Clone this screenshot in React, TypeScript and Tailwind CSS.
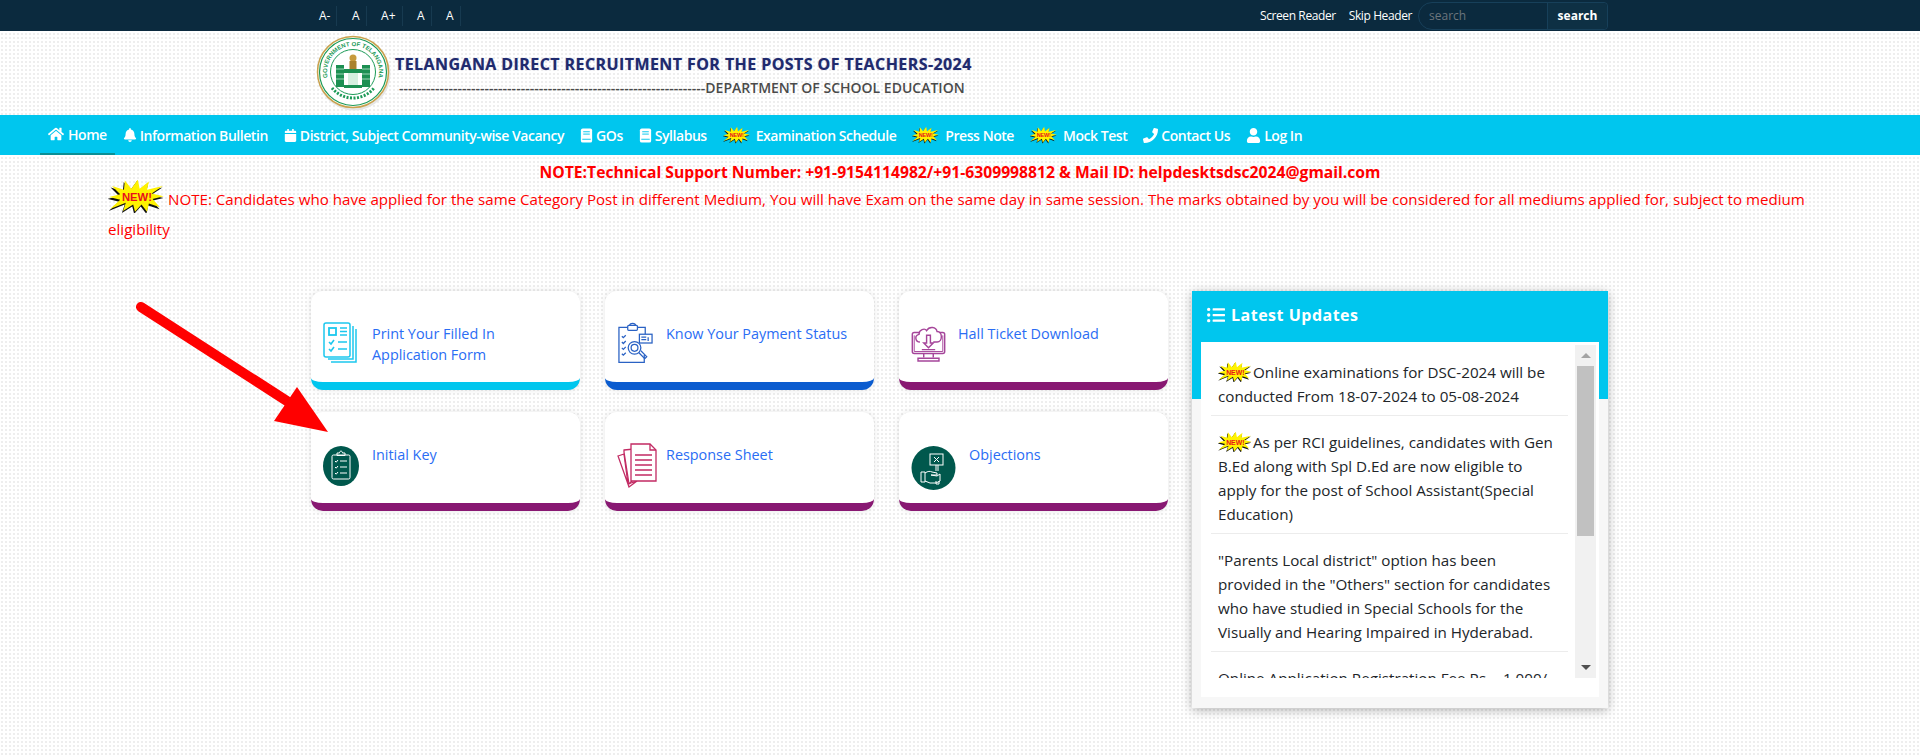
import type { ReactNode } from "react";
import { FaHome, FaBell, FaCalendar, FaPhone, FaUser, FaListUl } from "react-icons/fa";

const burstPoints =
  "31,0 33,10 43,2 41,11 58,7 46,15 59,18 47,21 55,30 43,26 41,35 35,27 28,35 26,27 15,34 18,25 1,32 12,22 0,19 12,16 3,7 16,11 17,1 24,10";

const NewBurst = ({ className }: { className: string }) => (
  <svg viewBox="0 0 59 35" className={className}>
    <polygon points={burstPoints} fill="#111" transform="translate(-1 1)" />
    <polygon points={burstPoints} fill="#fff200" transform="translate(0.5 -0.5) scale(0.98)" />
    <text x="30" y="22" textAnchor="middle" fontSize="12" fontWeight="700" fontFamily="Liberation Sans, sans-serif" fill="#e8101c">
      NEW!
    </text>
  </svg>
);

const BookIcon = () => (
  <svg viewBox="0 0 13 16" className="w-[13px] h-[15px]">
    <rect x="0.500" y="0.500" width="12" height="15" rx="2" fill="#fff" />
    <path d="M3 4h7M3 6.500h7M2 12h9" stroke="#00c6ee" strokeWidth="1" />
  </svg>
);

const navItems: { label: string; icon?: ReactNode; burst?: boolean }[] = [
  { label: "Information Bulletin", icon: <FaBell size={14} /> },
  { label: "District, Subject Community-wise Vacancy", icon: <FaCalendar size={13} /> },
  { label: "GOs", icon: <BookIcon /> },
  { label: "Syllabus", icon: <BookIcon /> },
  { label: "Examination Schedule", burst: true },
  { label: "Press Note", burst: true },
  { label: "Mock Test", burst: true },
  { label: "Contact Us", icon: <FaPhone size={15} /> },
  { label: "Log In", icon: <FaUser size={15} /> },
];

const PrintIcon = () => (
  <svg viewBox="0 0 36 42" className="w-[36px] h-[42px]" fill="none" stroke="#1cc8ee" strokeWidth="1.5">
    <rect x="1" y="1" width="26" height="34" rx="2" />
    <path d="M30 4v33H5M33 7v33H8" />
    <rect x="6" y="6" width="7" height="7" strokeWidth="1.8" />
    <path d="M17 6h7M17 9.500h7M17 13h7M6 20l2 2 3-4M15 20h9M6 27l2 2 3-4M15 27h9" strokeWidth="1.6" />
  </svg>
);

const PaymentIcon = () => (
  <svg viewBox="0 0 38 42" className="w-[37px] h-[42px]" fill="none" stroke="#2a62c4" strokeWidth="1.3">
    <path d="M11 5H2v36h26V33M21 5h8v7" />
    <rect x="11" y="3" width="10" height="5" rx="1" />
    <path d="M13 3c0-3 6-3 6 0" />
    <path d="M5 14l1.500 1.500L9 13M5 20l1.500 1.500L9 19M5 26l1.500 1.500L9 25M5 32l1.500 1.500L9 31" />
    <rect x="23" y="12" width="13" height="9" fill="#fff" />
    <path d="M25 15h5M25 17.500h5M32 15v4" />
    <circle cx="18" cy="26" r="6.500" fill="#fff" />
    <circle cx="18" cy="26" r="3.500" />
    <path d="M22.500 31l6 6 2-2-6-6" />
  </svg>
);

const MonitorIcon = () => (
  <svg viewBox="0 0 36 42" className="w-[35px] h-[40px]" fill="none" stroke="#a5459a" strokeWidth="1.5">
    <rect x="1" y="11" width="34" height="22" rx="2" />
    <path d="M3 14v17h30V14" strokeWidth="1" />
    <path d="M13 33v4M23 33v4M7 41v-3h22v3z" />
    <path d="M9 21c-5 0-6-7-1-8 0-5 6-7 8-4 3-5 10-4 11 1 6 0 6 11 0 11h-4" fill="#fff" />
    <path d="M16 14h4v8h3l-5 5-5-5h3zM11 29h14" fill="#fff" />
  </svg>
);

const KeyIcon = () => (
  <svg viewBox="0 0 36 40" className="w-[36px] h-[40px] mt-[3px]">
    <ellipse cx="18" cy="20" rx="18" ry="20" fill="#00584d" />
    <g fill="none" stroke="#fff" strokeWidth="1">
      <rect x="9" y="9" width="18" height="24" rx="1.500" />
      <path d="M14 9V7h2.500c0-2.500 3-2.500 3 0H22v2.500h-8zM12 15l1.200 1.200L15 14M12 21l1.200 1.200L15 20M12 27l1.200 1.200L15 26M17 15h7M17 21h7M17 27h7" />
    </g>
  </svg>
);

const SheetIcon = () => (
  <svg viewBox="0 0 40 46" className="w-[40px] h-[46px]" fill="none" stroke="#c22a63" strokeWidth="1.3">
    <path d="M1 13l6-2 4 30 9-3-8 6z" fill="#fff" />
    <path d="M7 7l10-1v30L12 41 7 9z" fill="#fff" />
    <path d="M14 1h19l6 6v31H14z" fill="#fff" />
    <path d="M33 1v6h6" />
    <path d="M18 12h17M18 17h17M18 22h17M18 27h17M18 32h17" strokeWidth="1.700" />
  </svg>
);

const ObjectionIcon = () => (
  <svg viewBox="0 0 45 44" className="w-[45px] h-[44px] mt-[3px]">
    <circle cx="22.500" cy="22" r="22" fill="#00584d" />
    <g fill="none" stroke="#fff" strokeWidth="1">
      <rect x="19" y="8" width="13" height="11" />
      <path d="M23 11l5 5M28 11l-5 5M25 19v6M27 19v6M25 35v3h3v-3" />
      <path d="M10 26h4v10h-4zM14 27c3-2 5-2 7-1l5 1v2l-6 0 6 1 3-2v7l-4 2h-6l-5-2" />
    </g>
  </svg>
);

const Seal = () => (
  <svg viewBox="0 0 76 76" className="w-[76px] h-[76px] shrink-0">
    <circle cx="38" cy="39" r="36.500" fill="#e6e6e6" />
    <circle cx="37" cy="37" r="35.500" fill="#fff" stroke="#c9a24e" strokeWidth="1.500" />
    <circle cx="37" cy="37" r="33.500" fill="none" stroke="#1c9a57" strokeWidth="1.200" />
    <circle cx="37" cy="37" r="22.500" fill="none" stroke="#1c9a57" strokeWidth="1" />
    <path id="sealArc" d="M14.500 50A26 26 0 1 1 59.500 50" fill="none" />
    <text fontSize="6" fontWeight="700" fill="#1c9a57" textAnchor="middle" fontFamily="Liberation Sans, sans-serif">
      <textPath href="#sealArc" startOffset="50%">GOVERNMENT OF TELANGANA</textPath>
    </text>
    <path d="M20 30h8v22h-8zM46 30h8v22h-8z" fill="#1c8f52" />
    <path d="M20 34h8M20 39h8M20 44h8M46 34h8M46 39h8M46 44h8" stroke="#bfe6cf" strokeWidth="0.800" />
    <path d="M28 34h18v4H28zM28 50h18v3H28z" fill="#1c8f52" />
    <path d="M32 38h10v12H32z" fill="#d6efe0" />
    <circle cx="37" cy="23" r="3.500" fill="#c79a3d" />
    <path d="M33.500 26h7v8h-7z" fill="#a9822e" />
    <path d="M16 53a27 27 0 0 0 42 0" stroke="#1c9a57" strokeWidth="3" strokeDasharray="2 1.500" fill="none" />
  </svg>
);

const Card = ({ icon, lines, bar, gap }: { icon: ReactNode; lines: string[]; bar: string; gap: string }) => (
  <div className={`h-[99px] rounded-[12px] bg-white border-b-[8px] shadow-[0_0_6px_rgba(0,0,0,0.1)] flex items-start pl-3 pt-[31px] ${bar} ${gap}`}>
    <div className="shrink-0">{icon}</div>
    <a className="mt-[1px] text-[14.4px] leading-[21px] font-medium text-[#2a6df4]">
      {lines.map((l) => (
        <div key={l}>{l}</div>
      ))}
    </a>
  </div>
);

const Scrollbar = () => (
  <div className="w-[21px] h-[333px] bg-[#f1f1f1] flex flex-col items-center">
    <div className="h-[21px] flex items-center justify-center">
      <div className="w-0 h-0 border-x-[5px] border-x-transparent border-b-[5px] border-b-[#a3a3a3]" />
    </div>
    <div className="w-[17px] h-[170px] bg-[#c1c1c1]" />
    <div className="flex-1" />
    <div className="h-[21px] flex items-center justify-center">
      <div className="w-0 h-0 border-x-[5px] border-x-transparent border-t-[5px] border-t-[#505050]" />
    </div>
  </div>
);

export default function App() {
  return (
    <div className="relative h-[755px] overflow-hidden text-[#212529] font-['Open_Sans',sans-serif] bg-white bg-[radial-gradient(#eeeeee_1px,transparent_1px)] bg-[size:4px_4px]">
      {/* top strip */}
      <div className="h-[31px] bg-[#0b2a3e] flex items-center justify-between pl-[313px] pr-[312px] text-white">
        <div className="flex text-[12px]">
          {["A-", "A", "A+", "A", "A"].map((t, i) => (
            <span key={i} className="h-[20px] leading-[20px] px-[6px] mr-[8.5px] border-r border-[#173a50]">{t}</span>
          ))}
        </div>
        <div className="flex items-center text-[12px]">
          <span className="mr-[13px] tracking-[-0.4px]">Screen Reader</span>
          <span className="mr-[6px] tracking-[-0.4px]">Skip Header</span>
          <div className="flex h-[28px] w-[190px] border border-[#17405a] rounded-l-[14px] rounded-r-[4px]">
            <span className="w-[128px] pl-[10px] leading-[26px] text-[#6c757d]">search</span>
            <span className="flex-1 bg-[#0e3044] border-l border-[#17405a] rounded-r-[4px] text-center font-bold leading-[26px]">search</span>
          </div>
        </div>
      </div>

      {/* header */}
      <div className="h-[84px] pl-[316px] flex items-center">
        <Seal />
        <div className="ml-[3px] pt-[4px]">
          <div className="text-[16px] leading-[24px] font-bold tracking-[0.42px] text-[#1f2a6e] [text-shadow:0_0_1px_#9aa0c8]">
            TELANGANA DIRECT RECRUITMENT FOR THE POSTS OF TEACHERS-2024
          </div>
          <div className="mt-[2px] text-[14px] leading-[20px] font-semibold text-[#4a4a4a] pl-[4px] whitespace-nowrap">
            {"-".repeat(68)}DEPARTMENT OF SCHOOL EDUCATION
          </div>
        </div>
      </div>

      {/* nav */}
      <nav className="h-[40px] bg-[#00c6ee] pl-[40px] flex text-white text-[14px] font-semibold tracking-[-0.45px]">
        <a className="h-[40px] px-[8px] flex items-center gap-[4px] border-b-2 border-[#0a8f95]">
          <FaHome size={16} />
          Home
        </a>
        {navItems.map((n) => (
          <a key={n.label} className="h-[40px] px-[8px] flex items-center gap-[3px]">
            {n.burst ? <NewBurst className="w-[27px] h-[18px] mr-[3px]" /> : n.icon}
            {n.label}
          </a>
        ))}
      </nav>

      {/* notices */}
      <div className="pt-[5px] px-[108px]">
        <p className="text-center text-[15.7px] leading-[24px] font-bold text-[#ff0000]">
          NOTE:Technical Support Number: +91-9154114982/+91-6309998812 &amp; Mail ID: helpdesktsdsc2024@gmail.com
        </p>
        <p className="text-[15.14px] leading-[30px] text-[#ff0000]">
          <NewBurst className="inline-block w-[57px] h-[33px] -mt-[8px] mr-[3px]" />
          NOTE: Candidates who have applied for the same Category Post in different Medium, You will have Exam on the same day in same session. The marks obtained by you will be considered for all mediums applied for, subject to medium eligibility
        </p>
      </div>

      {/* cards and updates */}
      <div className="mt-[47px] ml-[311px] flex items-start">
        <div className="grid grid-cols-[269px_269px_269px] gap-x-[25px] gap-y-[22px] mr-[24px]">
          <Card icon={<PrintIcon />} lines={["Print Your Filled In", "Application Form"]} bar="border-[#00c6ee]" gap="gap-[13px]" />
          <Card icon={<PaymentIcon />} lines={["Know Your Payment Status"]} bar="border-[#0b5ccf]" gap="gap-[12px]" />
          <Card icon={<MonitorIcon />} lines={["Hall Ticket Download"]} bar="border-[#881872]" gap="gap-[12px]" />
          <Card icon={<KeyIcon />} lines={["Initial Key"]} bar="border-[#881872]" gap="gap-[13px]" />
          <Card icon={<SheetIcon />} lines={["Response Sheet"]} bar="border-[#881872]" gap="gap-[9px]" />
          <Card icon={<ObjectionIcon />} lines={["Objections"]} bar="border-[#881872]" gap="gap-[13px]" />
        </div>

        <div className="relative w-[416px] h-[417px] bg-[#f7f7f7] shadow-[0_2px_10px_rgba(0,0,0,0.3)]">
          <div className="h-[108px] bg-[#00c6ee] px-[15px] pt-[10px] flex items-start gap-[6px] text-white text-[16px] leading-[28px] font-bold tracking-[0.5px]">
            <FaListUl size={18} className="mt-[5px]" />
            Latest Updates
          </div>
          <div className="absolute left-[9px] top-[51px] w-[398px] h-[355px] bg-white pt-[3px] pl-[10px] flex items-start">
            <div className="w-[357px] h-[333px] overflow-hidden text-[15.2px] leading-[24px] text-[#212529] mr-[7px]">
              <div className="pl-[7px] pr-[10px] pt-[15px] pb-[7px] border-b border-[#ececec]">
                <NewBurst className="inline-block w-[34px] h-[20px] -mt-[4px] mr-[1px]" />
                Online examinations for DSC-2024 will be conducted From 18-07-2024 to 05-08-2024
              </div>
              <div className="pl-[7px] pr-[10px] pt-[14px] pb-[7px] border-b border-[#ececec]">
                <NewBurst className="inline-block w-[34px] h-[20px] -mt-[4px] mr-[1px]" />
                As per RCI guidelines, candidates with Gen B.Ed along with Spl D.Ed are now eligible to apply for the post of School Assistant(Special Education)
              </div>
              <div className="pl-[7px] pr-[10px] pt-[14px] pb-[7px] border-b border-[#ececec]">
                "Parents Local district" option has been provided in the "Others" section for candidates who have studied in Special Schools for the Visually and Hearing Impaired in Hyderabad.
              </div>
              <div className="pl-[7px] pr-[10px] pt-[14px]">Online Application Registration Fee Rs. - 1,000/-</div>
            </div>
            <Scrollbar />
          </div>
        </div>
      </div>

      {/* arrow drawn over the page */}
      <svg viewBox="0 0 1920 755" className="absolute inset-0 w-[1920px] h-[755px] pointer-events-none">
        <path d="M141 307L290 403" stroke="#ff0000" strokeWidth="10" strokeLinecap="round" />
        <polygon points="297,387 274,421 328,432" fill="#ff0000" />
      </svg>
    </div>
  );
}
